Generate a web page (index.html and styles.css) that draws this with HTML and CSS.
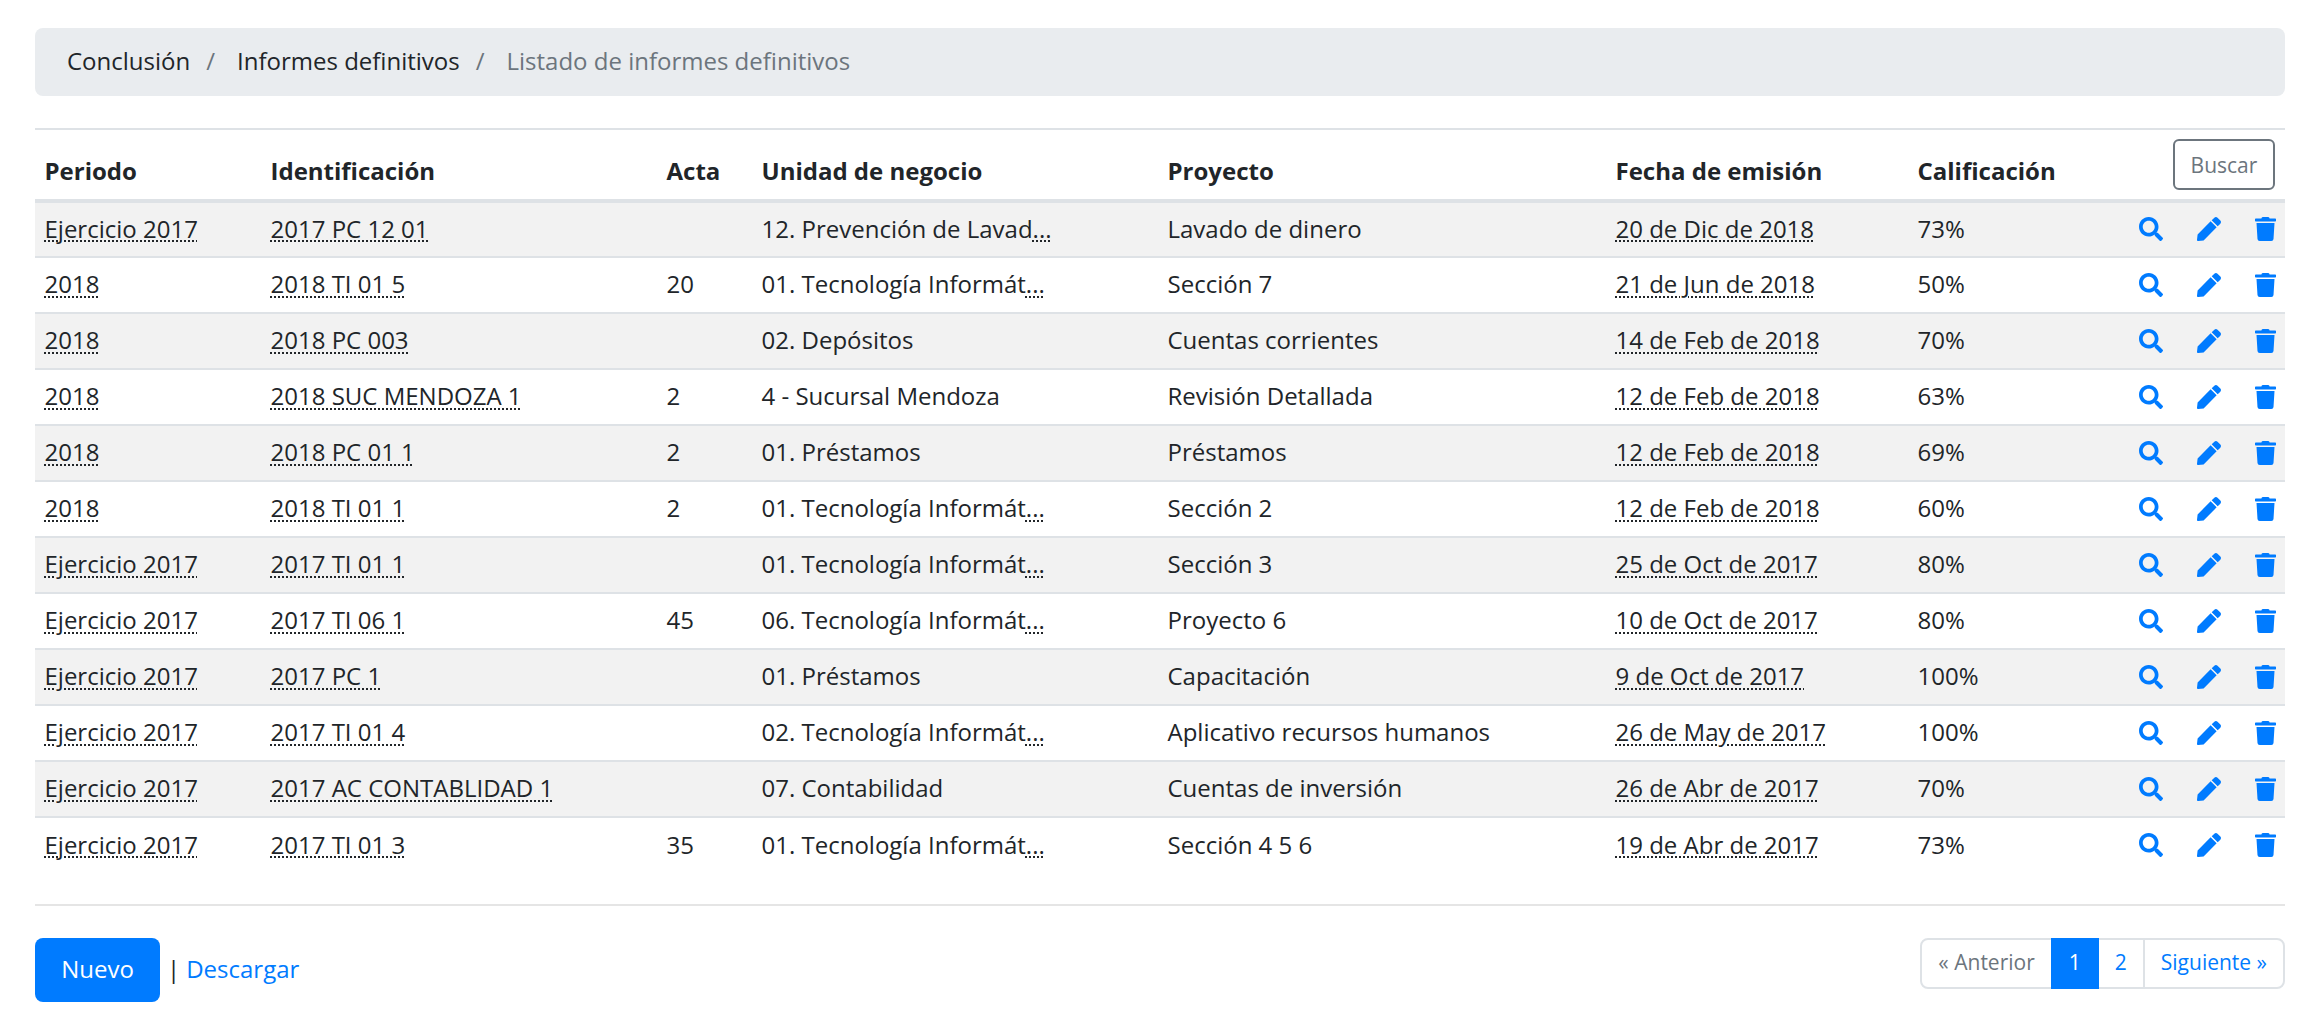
FILE: index.html
```html
<!DOCTYPE html>
<html lang="es">

<head>
    <meta charset="utf-8">
    <title>Listado de informes definitivos</title>
    <link rel="stylesheet" href="styles.css">
</head>

<body>
    <svg class="icon-defs" width="0" height="0">
        <symbol id="i-search" viewBox="0 0 512 512"><path d="M505 442.7L405.3 343c-4.5-4.5-10.6-7-17-7H372c27.6-35.3 44-79.7 44-128C416 93.1 322.9 0 208 0S0 93.1 0 208s93.1 208 208 208c48.3 0 92.7-16.4 128-44v16.3c0 6.4 2.5 12.5 7 17l99.7 99.7c9.4 9.4 24.6 9.4 33.9 0l28.3-28.3c9.4-9.4 9.4-24.6.1-34zM208 336c-70.7 0-128-57.2-128-128 0-70.7 57.2-128 128-128 70.7 0 128 57.2 128 128 0 70.7-57.2 128-128 128z"/></symbol>
        <symbol id="i-pen" viewBox="0 0 512 512"><path d="M290.74 93.24l128.02 128.02-277.99 277.99-114.14 12.6C11.35 513.54-1.56 500.62.14 485.34l12.7-114.22 277.9-277.88zm207.2-19.06l-60.11-60.11c-18.75-18.75-49.16-18.75-67.91 0l-56.55 56.55 128.02 128.02 56.55-56.55c18.75-18.76 18.75-49.16 0-67.91z"/></symbol>
        <symbol id="i-trash" viewBox="0 0 448 512"><path d="M432 32H312l-9.4-18.7A24 24 0 0 0 281.1 0H166.8a23.72 23.72 0 0 0-21.4 13.3L136 32H16A16 16 0 0 0 0 48v32a16 16 0 0 0 16 16h416a16 16 0 0 0 16-16V48a16 16 0 0 0-16-16zM53.2 467a48 48 0 0 0 47.9 45h245.8a48 48 0 0 0 47.9-45L416 128H32z"/></symbol>
    </svg>

    <div class="breadcrumb">
        <a href="#">Conclusión</a>
        <span class="sep">/</span>
        <a href="#">Informes definitivos</a>
        <span class="sep">/</span>
        <span class="current">Listado de informes definitivos</span>
    </div>

    <hr class="rule-top">

    <table class="list">
        <colgroup>
            <col class="c-periodo">
            <col class="c-ident">
            <col class="c-acta">
            <col class="c-unidad">
            <col class="c-proyecto">
            <col class="c-fecha">
            <col class="c-calif">
            <col class="c-acciones">
        </colgroup>
        <thead>
            <tr>
                <th>Periodo</th>
                <th>Identificación</th>
                <th>Acta</th>
                <th>Unidad de negocio</th>
                <th>Proyecto</th>
                <th>Fecha de emisión</th>
                <th>Calificación</th>
                <th class="th-buscar"><button class="btn-buscar">Buscar</button></th>
            </tr>
        </thead>
        <tbody>
            <tr>
                <td><abbr>Ejercicio 2017</abbr></td><td><abbr>2017 PC 12 01</abbr></td><td></td>
                <td>12. Prevención de Lavad<abbr>...</abbr></td><td>Lavado de dinero</td>
                <td><abbr>20 de Dic de 2018</abbr></td><td>73%</td>
                <td class="acciones"><svg class="icon"><use href="#i-search"/></svg><svg class="icon"><use href="#i-pen"/></svg><svg class="icon icon-trash"><use href="#i-trash"/></svg></td>
            </tr>
            <tr>
                <td><abbr>2018</abbr></td><td><abbr>2018 TI 01 5</abbr></td><td>20</td>
                <td>01. Tecnología Informát<abbr>...</abbr></td><td>Sección 7</td>
                <td><abbr>21 de Jun de 2018</abbr></td><td>50%</td>
                <td class="acciones"><svg class="icon"><use href="#i-search"/></svg><svg class="icon"><use href="#i-pen"/></svg><svg class="icon icon-trash"><use href="#i-trash"/></svg></td>
            </tr>
            <tr>
                <td><abbr>2018</abbr></td><td><abbr>2018 PC 003</abbr></td><td></td>
                <td>02. Depósitos</td><td>Cuentas corrientes</td>
                <td><abbr>14 de Feb de 2018</abbr></td><td>70%</td>
                <td class="acciones"><svg class="icon"><use href="#i-search"/></svg><svg class="icon"><use href="#i-pen"/></svg><svg class="icon icon-trash"><use href="#i-trash"/></svg></td>
            </tr>
            <tr>
                <td><abbr>2018</abbr></td><td><abbr>2018 SUC MENDOZA 1</abbr></td><td>2</td>
                <td>4 - Sucursal Mendoza</td><td>Revisión Detallada</td>
                <td><abbr>12 de Feb de 2018</abbr></td><td>63%</td>
                <td class="acciones"><svg class="icon"><use href="#i-search"/></svg><svg class="icon"><use href="#i-pen"/></svg><svg class="icon icon-trash"><use href="#i-trash"/></svg></td>
            </tr>
            <tr>
                <td><abbr>2018</abbr></td><td><abbr>2018 PC 01 1</abbr></td><td>2</td>
                <td>01. Préstamos</td><td>Préstamos</td>
                <td><abbr>12 de Feb de 2018</abbr></td><td>69%</td>
                <td class="acciones"><svg class="icon"><use href="#i-search"/></svg><svg class="icon"><use href="#i-pen"/></svg><svg class="icon icon-trash"><use href="#i-trash"/></svg></td>
            </tr>
            <tr>
                <td><abbr>2018</abbr></td><td><abbr>2018 TI 01 1</abbr></td><td>2</td>
                <td>01. Tecnología Informát<abbr>...</abbr></td><td>Sección 2</td>
                <td><abbr>12 de Feb de 2018</abbr></td><td>60%</td>
                <td class="acciones"><svg class="icon"><use href="#i-search"/></svg><svg class="icon"><use href="#i-pen"/></svg><svg class="icon icon-trash"><use href="#i-trash"/></svg></td>
            </tr>
            <tr>
                <td><abbr>Ejercicio 2017</abbr></td><td><abbr>2017 TI 01 1</abbr></td><td></td>
                <td>01. Tecnología Informát<abbr>...</abbr></td><td>Sección 3</td>
                <td><abbr>25 de Oct de 2017</abbr></td><td>80%</td>
                <td class="acciones"><svg class="icon"><use href="#i-search"/></svg><svg class="icon"><use href="#i-pen"/></svg><svg class="icon icon-trash"><use href="#i-trash"/></svg></td>
            </tr>
            <tr>
                <td><abbr>Ejercicio 2017</abbr></td><td><abbr>2017 TI 06 1</abbr></td><td>45</td>
                <td>06. Tecnología Informát<abbr>...</abbr></td><td>Proyecto 6</td>
                <td><abbr>10 de Oct de 2017</abbr></td><td>80%</td>
                <td class="acciones"><svg class="icon"><use href="#i-search"/></svg><svg class="icon"><use href="#i-pen"/></svg><svg class="icon icon-trash"><use href="#i-trash"/></svg></td>
            </tr>
            <tr>
                <td><abbr>Ejercicio 2017</abbr></td><td><abbr>2017 PC 1</abbr></td><td></td>
                <td>01. Préstamos</td><td>Capacitación</td>
                <td><abbr>9 de Oct de 2017</abbr></td><td>100%</td>
                <td class="acciones"><svg class="icon"><use href="#i-search"/></svg><svg class="icon"><use href="#i-pen"/></svg><svg class="icon icon-trash"><use href="#i-trash"/></svg></td>
            </tr>
            <tr>
                <td><abbr>Ejercicio 2017</abbr></td><td><abbr>2017 TI 01 4</abbr></td><td></td>
                <td>02. Tecnología Informát<abbr>...</abbr></td><td>Aplicativo recursos humanos</td>
                <td><abbr>26 de May de 2017</abbr></td><td>100%</td>
                <td class="acciones"><svg class="icon"><use href="#i-search"/></svg><svg class="icon"><use href="#i-pen"/></svg><svg class="icon icon-trash"><use href="#i-trash"/></svg></td>
            </tr>
            <tr>
                <td><abbr>Ejercicio 2017</abbr></td><td><abbr>2017 AC CONTABLIDAD 1</abbr></td><td></td>
                <td>07. Contabilidad</td><td>Cuentas de inversión</td>
                <td><abbr>26 de Abr de 2017</abbr></td><td>70%</td>
                <td class="acciones"><svg class="icon"><use href="#i-search"/></svg><svg class="icon"><use href="#i-pen"/></svg><svg class="icon icon-trash"><use href="#i-trash"/></svg></td>
            </tr>
            <tr>
                <td><abbr>Ejercicio 2017</abbr></td><td><abbr>2017 TI 01 3</abbr></td><td>35</td>
                <td>01. Tecnología Informát<abbr>...</abbr></td><td>Sección 4 5 6</td>
                <td><abbr>19 de Abr de 2017</abbr></td><td>73%</td>
                <td class="acciones"><svg class="icon"><use href="#i-search"/></svg><svg class="icon"><use href="#i-pen"/></svg><svg class="icon icon-trash"><use href="#i-trash"/></svg></td>
            </tr>
        </tbody>
    </table>

    <hr class="rule-bottom">

    <div class="footer">
        <div class="footer-left">
            <button class="btn-nuevo">Nuevo</button>
            <span class="pipe">|</span>
            <a class="link" href="#">Descargar</a>
        </div>
        <ul class="pagination">
            <li class="disabled">« Anterior</li>
            <li class="active">1</li>
            <li>2</li>
            <li>Siguiente »</li>
        </ul>
    </div>
</body>

</html>
```
FILE: styles.css
```css
* {
    margin: 0px;
    padding: 0px;
    box-sizing: border-box;
}

body {
    font-family: "Open Sans", sans-serif;
    font-size: 24px;
    line-height: 36px;
    color: #212529;
    background: #fff;
    padding: 28px 15px 0px 35px;
}

a {
    color: inherit;
    text-decoration: none;
}

.icon-defs {
    display: block;
    height: 0;
}

.breadcrumb {
    display: flex;
    height: 68px;
    align-items: center;
    padding: 0px 32px 2px;
    background: #e9ecef;
    border-radius: 8px;
}

.breadcrumb .sep {
    padding: 0px 22px 0px 16px;
    color: #6c757d;
}

.breadcrumb .current {
    color: #6c757d;
}

.rule-top,
.rule-bottom {
    border: none;
    height: 2px;
}

.rule-top {
    margin-top: 32px;
    background: #dee2e6;
}

.rule-bottom {
    margin-top: 31px;
    background: #e5e5e5;
}

.list {
    width: 100%;
    border-collapse: collapse;
    table-layout: fixed;
}

.c-periodo { width: 226px; }
.c-ident { width: 396px; }
.c-acta { width: 95px; }
.c-unidad { width: 406px; }
.c-proyecto { width: 448px; }
.c-fecha { width: 302px; }
.c-calif { width: 217px; }

.list thead th {
    height: 71px;
    padding: 13px 10px 0px 9.5px;
    text-align: left;
    font-weight: 700;
    border-bottom: 4px solid #dee2e6;
}

.list .th-buscar {
    padding: 0px 10px 0px 0px;
    text-align: right;
}

.btn-buscar {
    width: 102px;
    height: 51px;
    font: 400 21px "Open Sans", sans-serif;
    color: #6c757d;
    background: #fff;
    border: 2px solid #6c757d;
    border-radius: 6px;
    vertical-align: middle;
}

.list tbody td {
    height: 56px;
    padding: 0px 10px 2px 9.5px;
    border-bottom: 2px solid #dee2e6;
    white-space: nowrap;
}

.list tbody tr:last-child td {
    border-bottom: none;
}

.list tbody tr:nth-child(odd) {
    background: #f2f2f2;
}

abbr {
    text-decoration: underline dotted;
    text-decoration-thickness: 2px;
    text-underline-offset: 3px;
}

.list tbody .acciones {
    padding-right: 9px;
    text-align: right;
}

.icon {
    width: 24px;
    height: 24px;
    fill: #007bff;
    margin-left: 34px;
    margin-bottom: 4px;
    vertical-align: middle;
}

.icon:first-child {
    margin-left: 0px;
}

.icon-trash {
    width: 21px;
}

.footer {
    display: flex;
    justify-content: space-between;
    align-items: flex-start;
    margin-top: 32px;
}

.footer-left {
    display: flex;
    align-items: baseline;
}

.btn-nuevo {
    width: 125px;
    height: 64px;
    padding-bottom: 3px;
    font: 400 24px "Open Sans", sans-serif;
    color: #fff;
    background: #007bff;
    border: none;
    border-radius: 8px;
}

.pipe {
    margin-left: 7px;
}

.link {
    margin-left: 6px;
    color: #007bff;
}

.pagination {
    display: flex;
    list-style: none;
    height: 51px;
    font-size: 21px;
    line-height: 45px;
    color: #007bff;
    border: 2px solid #dee2e6;
    border-radius: 8px;
}

.pagination li {
    padding: 0px 16px;
}

.pagination li:nth-child(3) {
    border-right: 2px solid #dee2e6;
}

.pagination .disabled {
    color: #6c757d;
}

.pagination .active {
    width: 48px;
    height: 51px;
    margin-top: -2px;
    line-height: 49px;
    text-align: center;
    color: #fff;
    background: #007bff;
}
```
